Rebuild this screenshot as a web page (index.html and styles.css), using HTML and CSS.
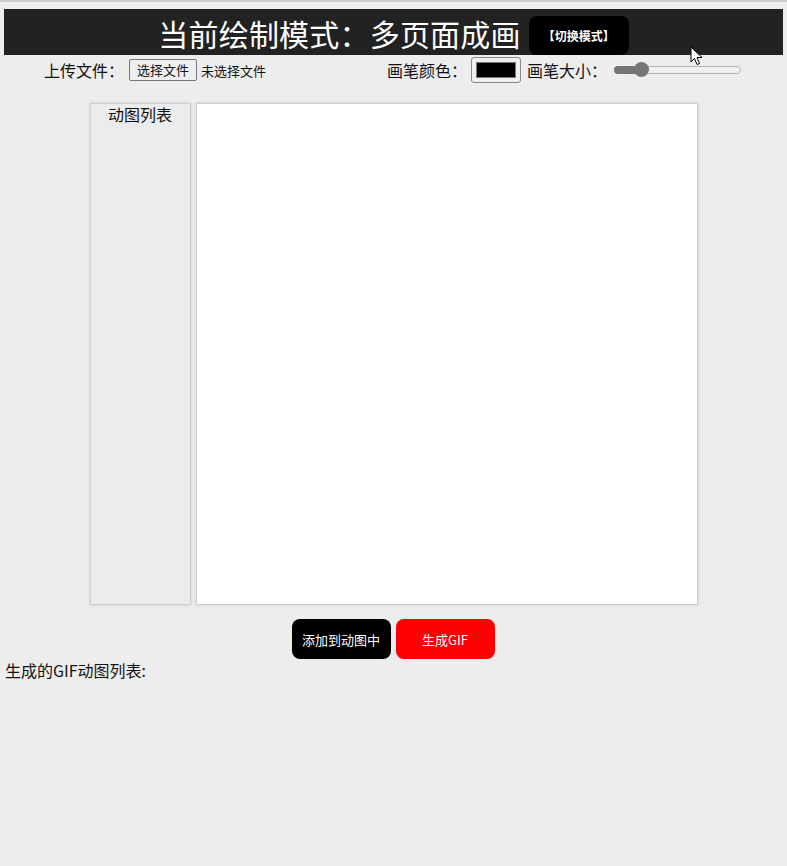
FILE: index.html
```html
<!DOCTYPE html>
<html lang="zh-CN">
<head>
<meta charset="utf-8">
<title>绘制</title>
<link rel="stylesheet" href="styles.css">
</head>
<body>
<header class="topbar">
  <h1 class="title">当前绘制模式：多页面成画</h1>
  <button class="mode-btn">【切换模式】</button>
  <svg class="cursor" width="14" height="20" viewBox="0 0 14 20"><path d="M1 1 L1 16 L4.5 12.5 L7 18.5 L9.5 17.5 L7 11.5 L12 11.5 Z" fill="#fff" stroke="#000" stroke-width="1"/></svg>
</header>
<div class="toolbar">
  <div class="group">
    <span class="label">上传文件：</span>
    <span class="file-btn">选择文件</span>
    <span class="file-name">未选择文件</span>
  </div>
  <div class="group">
    <span class="label">画笔颜色：</span>
    <span class="color-box"><span class="swatch"></span></span>
    <span class="label">画笔大小：</span>
    <span class="range"><span class="range-fill"></span><span class="range-thumb"></span></span>
  </div>
</div>
<main class="stage">
  <aside class="sidebar">
    <div class="sidebar-title">动图列表</div>
  </aside>
  <div class="canvas"></div>
</main>
<div class="actions">
  <button class="btn btn-dark">添加到动图中</button>
  <button class="btn btn-red">生成GIF</button>
</div>
<div class="gif-list">生成的GIF动图列表:</div>
</body>
</html>
```
FILE: styles.css
```css
html, body {
  margin: 0;
  background: #ededed;
}
body {
  border-top: 2px solid #cdcdcd;
  padding: 7px 4px 0;
  font-family: "Noto Sans CJK SC", "Noto Sans", sans-serif;
  color: #111;
  min-height: 860px;
  box-sizing: border-box;
}
.topbar {
  position: relative;
  height: 46px;
  background: #222;
  display: flex;
  justify-content: center;
  align-items: flex-end;
  gap: 8px;
}
.title {
  margin: 0;
  font-size: 30px;
  font-weight: normal;
  color: #fff;
  line-height: 44px;
  letter-spacing: 0.2px;
}
.mode-btn {
  height: 39px;
  width: 100px;
  border: none;
  border-radius: 8px;
  background: #000;
  color: #fff;
  font-family: "Noto Sans CJK SC", sans-serif;
  font-size: 12px;
  font-weight: bold;
  padding: 0;
  margin-left: 0;
}
.cursor {
  position: absolute;
  left: 686px;
  top: 37px;
}
.toolbar {
  display: flex;
  justify-content: space-between;
  align-items: center;
  padding: 0 42px 0 40px;
  height: 30px;
  margin-top: 0;
}
.group {
  display: flex;
  align-items: center;
}
.label {
  font-size: 16px;
}
.file-btn {
  margin-left: 5px;
  font-size: 13px;
  border: 1px solid #767676;
  border-radius: 2px;
  background: #efefef;
  padding: 0 7px;
  height: 20px;
  line-height: 19px;
}
.file-name {
  margin-left: 4px;
  font-size: 13px;
}
.color-box {
  margin: 0 6px 0 4px;
  width: 50px;
  height: 26px;
  box-sizing: border-box;
  border: 1px solid #8a8a8a;
  border-radius: 3px;
  background: #efefef;
  padding: 4px 4px;
  display: flex;
}
.swatch {
  flex: 1;
  background: #000;
  border: 1px solid #777;
}
.range {
  position: relative;
  margin-left: 7px;
  width: 127px;
  height: 8px;
  border: 1px solid #b5b5b5;
  border-radius: 5px;
  box-sizing: border-box;
  background: #efefef;
}
.range-fill {
  position: absolute;
  left: -1px;
  top: -1px;
  height: 8px;
  width: 28px;
  background: #767676;
  border-radius: 5px 0 0 5px;
}
.range-thumb {
  position: absolute;
  left: 19px;
  top: -5px;
  width: 15px;
  height: 15px;
  border-radius: 50%;
  background: #767676;
}
.stage {
  display: flex;
  justify-content: center;
  gap: 5px;
  margin-top: 18px;
}
.sidebar {
  width: 101px;
  height: 502px;
  box-sizing: border-box;
  border: 1px solid #cfcfcf;
  background: #ececec;
  box-shadow: 0 0 3px rgba(0,0,0,0.15);
}
.sidebar-title {
  text-align: center;
  font-size: 16px;
  line-height: 22px;
  margin-top: -1px;
}
.canvas {
  width: 502px;
  height: 502px;
  box-sizing: border-box;
  border: 1px solid #cfcfcf;
  background: #fff;
  box-shadow: 0 0 3px rgba(0,0,0,0.15);
}
.actions {
  display: flex;
  justify-content: center;
  gap: 5px;
  margin-top: 14px;
  padding-right: 1px;
}
.btn {
  width: 99px;
  height: 40px;
  border: none;
  border-radius: 8px;
  color: #fff;
  font-family: "Noto Sans CJK SC", sans-serif;
  font-size: 13px;
  padding: 0;
}
.btn-dark { background: #000; }
.btn-red { background: #ff0000; }
.gif-list {
  margin-top: 0;
  margin-left: 1px;
  font-size: 16px;
  line-height: 22px;
}
```
